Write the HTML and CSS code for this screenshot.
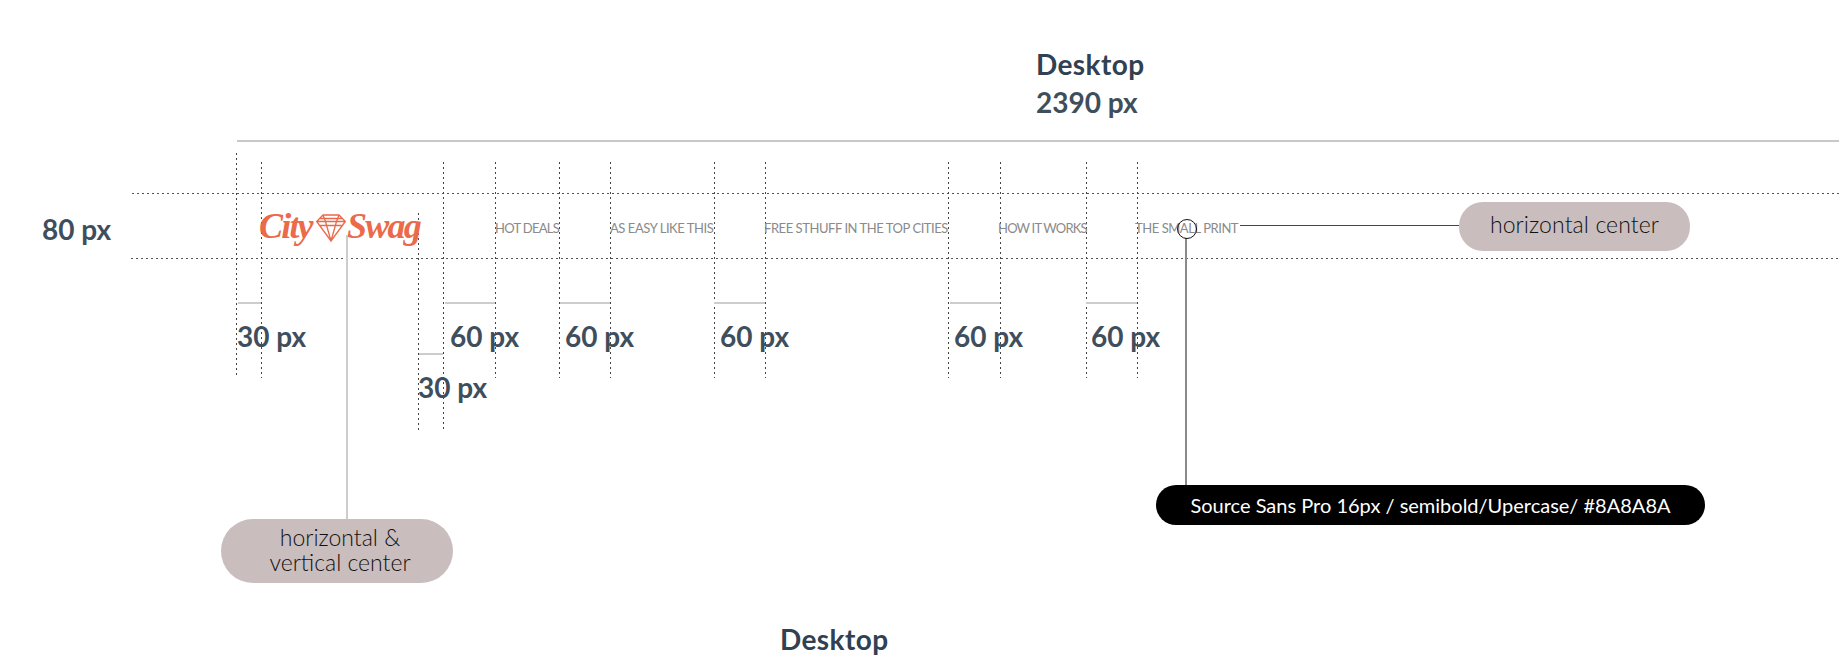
FILE: index.html
```html
<!DOCTYPE html>
<html lang="en">
<head>
<meta charset="utf-8">
<title>Desktop header spec</title>
<link rel="stylesheet" href="styles.css">
</head>
<body>
<main class="canvas">
  <h2 class="title title-top">Desktop<br><span class="title-size">2390 px</span></h2>
  <div class="rule rule-top"></div>

  <div class="guide-h guide-h1"></div>
  <div class="guide-h guide-h2"></div>

  <div class="guide-v g0"></div>
  <div class="guide-v g1"></div>
  <div class="guide-v g2"></div>
  <div class="guide-v g3"></div>
  <div class="guide-v g4"></div>
  <div class="guide-v g5"></div>
  <div class="guide-v g6"></div>
  <div class="guide-v g7"></div>
  <div class="guide-v g8"></div>
  <div class="guide-v g9"></div>
  <div class="guide-v g10"></div>
  <div class="guide-v g11"></div>
  <div class="guide-v g12"></div>

  <div class="tick t1"></div>
  <div class="tick t2"></div>
  <div class="tick t3"></div>
  <div class="tick t4"></div>
  <div class="tick t5"></div>
  <div class="tick t6"></div>
  <div class="tick t7"></div>

  <div class="dim d80">80 px</div>
  <div class="dim d30a">30 px</div>
  <div class="dim d30b">30 px</div>
  <div class="dim d60a">60 px</div>
  <div class="dim d60b">60 px</div>
  <div class="dim d60c">60 px</div>
  <div class="dim d60d">60 px</div>
  <div class="dim d60e">60 px</div>

  <header class="site-header">
    <div class="logo">
      <span class="logo-word logo-city">City</span>
      <svg class="gem" viewBox="0 0 30 28" aria-hidden="true">
        <path d="M7 1H23L29.3 7.500L15 27L.7 7.500ZM4 4.500H26M.7 7.500H29.300M3.500 11.500H26.500M7 1L9.500 7.500L15 27L20.500 7.500L23 1"/>
      </svg>
      <span class="logo-word logo-swag">Swag</span>
    </div>
    <nav class="nav">
      <a class="nav-item n1">HOT DEALS</a>
      <a class="nav-item n2">AS EASY LIKE THIS</a>
      <a class="nav-item n3">FREE STHUFF IN THE TOP CITIES</a>
      <a class="nav-item n4">HOW IT WORKS</a>
      <a class="nav-item n5">THE SMALL PRINT</a>
    </nav>
  </header>

  <div class="leader leader-logo"></div>
  <div class="leader leader-print"></div>
  <div class="leader leader-font"></div>
  <div class="ring"></div>

  <div class="pill pill-h">horizontal center</div>
  <div class="pill pill-hv">horizontal &amp;<br>vertical center</div>
  <div class="pill pill-font">Source Sans Pro 16px / semibold/Upercase/ #8A8A8A</div>

  <h2 class="title title-bottom">Desktop</h2>
</main>
</body>
</html>
```
FILE: styles.css
```css
* { box-sizing: border-box; }
html, body { margin: 0; background: #fff; }
body { width: 1839px; height: 662px; overflow: hidden; font-family: "Lato", "Liberation Sans", sans-serif; }
.canvas { position: relative; width: 1839px; height: 662px; overflow: hidden; }

.title { position: absolute; margin: 0; font-size: 28px; line-height: 38px; font-weight: 700; color: #2f4152; letter-spacing: .4px; }
.title-size { letter-spacing: 0; color: #3e4e5c; }
.title-top { left: 1036px; top: 45px; }
.title-bottom { left: 780px; top: 620px; }

.rule-top { position: absolute; left: 237px; right: 0; top: 140px; height: 2px; background: #c8c8c8; }

.guide-h { position: absolute; right: 0; height: 1px; background: repeating-linear-gradient(90deg, #555 0 2px, transparent 2px 5px); }
.guide-h1 { left: 132px; top: 193px; }
.guide-h2 { left: 131px; top: 258px; }

.guide-v { position: absolute; top: 162px; height: 216px; width: 1px; background: repeating-linear-gradient(180deg, #444 0 2px, transparent 2px 5px); }
.g0 { left: 236px; top: 153px; height: 225px; }
.g1 { left: 261px; }
.g2 { left: 418px; top: 213px; height: 217px; }
.g3 { left: 443px; height: 268px; }
.g4 { left: 495px; }
.g5 { left: 559px; }
.g6 { left: 610px; }
.g7 { left: 714px; }
.g8 { left: 765px; }
.g9 { left: 948px; }
.g10 { left: 1000px; }
.g11 { left: 1086px; }
.g12 { left: 1137px; }

.tick { position: absolute; top: 302px; height: 2px; background: #cdcdcd; }
.t1 { left: 238px; width: 23px; }
.t2 { left: 445px; width: 50px; }
.t3 { left: 560px; width: 50px; }
.t4 { left: 714px; width: 51px; }
.t5 { left: 950px; width: 50px; }
.t6 { left: 1086px; width: 51px; }
.t7 { left: 419px; width: 24px; top: 353px; }

.dim { position: absolute; font-size: 28px; line-height: 34px; font-weight: 700; color: #3e4e5c; white-space: nowrap; }
.d80 { left: 42px; top: 212px; }
.d30a { left: 237px; top: 319px; }
.d30b { left: 418px; top: 370px; }
.d60a { left: 450px; top: 319px; }
.d60b { left: 565px; top: 319px; }
.d60c { left: 720px; top: 319px; }
.d60d { left: 954px; top: 319px; }
.d60e { left: 1091px; top: 319px; }

.site-header { position: absolute; left: 259px; top: 194px; height: 64px; display: flex; align-items: center; }
.logo { width: 236px; display: flex; align-items: center; height: 64px; color: #ea6a4a; }
.logo-word { font-family: "Liberation Serif", serif; font-style: italic; font-weight: 700; font-size: 36px; line-height: 40px; letter-spacing: -1.8px; white-space: nowrap; }
.logo-city { width: 57px; }
.logo-swag { width: 72px; margin-left: 1px; }
.gem { width: 30px; height: 28px; fill: none; stroke: #ea6a4a; stroke-width: 1.3; margin-top: 4px; }
.nav { display: flex; gap: 51px; align-items: center; padding-top: 3px; }
.nav-item { font-size: 13px; line-height: 16px; color: #8a8a8a; white-space: nowrap; letter-spacing: -.45px; }
.n1 { width: 64px; letter-spacing: -.7px; }
.n2 { width: 103px; }
.n3 { width: 183px; }
.n4 { width: 86px; letter-spacing: -.8px; }
.n5 { width: 102px; }

.leader { position: absolute; }
.leader-logo { left: 346px; top: 235px; width: 2px; height: 284px; background: #ccc; }
.leader-print { left: 1240px; top: 225px; width: 219px; height: 1px; background: #444; }
.leader-font { left: 1185px; top: 238px; width: 2px; height: 247px; background: #8a8a8a; }
.ring { position: absolute; left: 1177px; top: 219px; width: 20px; height: 20px; border: 1px solid #111; border-radius: 50%; }

.pill { position: absolute; display: flex; align-items: center; justify-content: center; text-align: center; }
.pill-h { left: 1459px; top: 202px; width: 231px; height: 49px; border-radius: 24px; background: #c9bdbd; color: #111; font-size: 23px; font-weight: 300; letter-spacing: .1px; padding-bottom: 6px; }
.pill-hv { left: 221px; top: 519px; width: 232px; height: 64px; border-radius: 32px; background: #c9bdbd; color: #111; font-size: 23px; line-height: 25px; font-weight: 300; padding: 0 0 3px 6px; }
.pill-font { left: 1156px; top: 485px; width: 549px; height: 40px; border-radius: 20px; background: #000; color: #fff; font-size: 20px; font-weight: 400; white-space: nowrap; }
```
